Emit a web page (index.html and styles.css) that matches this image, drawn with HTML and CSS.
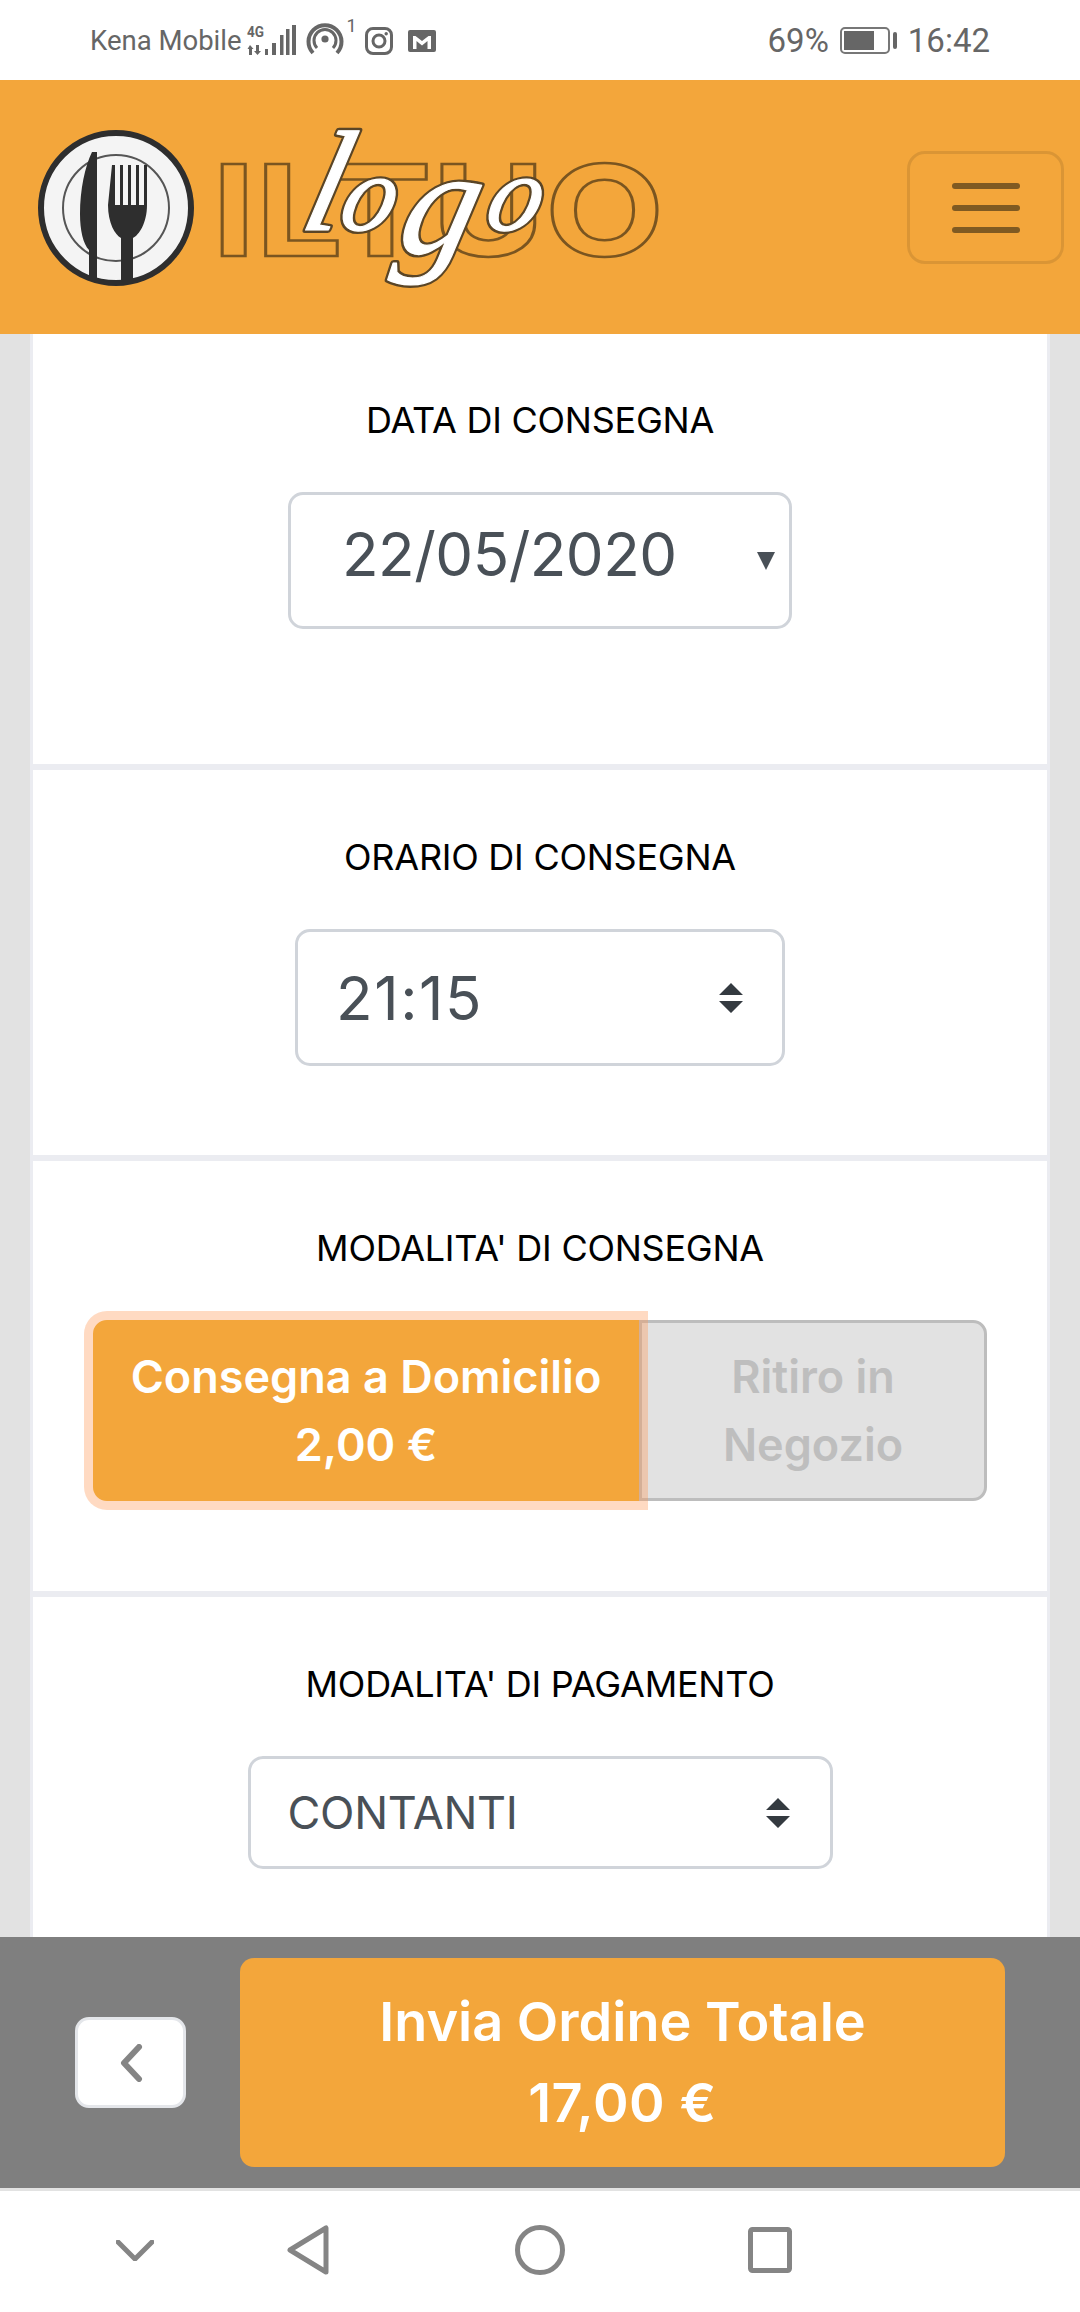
FILE: index.html
```html
<!DOCTYPE html>
<html lang="it">
<head>
<meta charset="utf-8">
<title>Il Tuo Logo - Ordine</title>
<link rel="stylesheet" href="styles.css">
</head>
<body>
<div class="page">
  <div class="status">
    <div class="status-left">
      <span class="carrier">Kena Mobile</span>
      <svg class="ic-signal" viewBox="0 0 50 32" width="50" height="32">
        <text class="net" x="0" y="12" textLength="17" lengthAdjust="spacingAndGlyphs">4G</text>
        <path class="fill" d="M3 20l3.500 4H5v6H2v-6H0.500zM9 20h3v6h2l-3.500 4L7 26h2zM18 24h3v6h-3zM25 18h4v12h-4zM33 10h3.500v20H33zM39 4h3.500v26H39zM45 0h4v30h-4z"/>
      </svg>
      <svg class="ic-hotspot" viewBox="0 0 34 32" width="34" height="32">
        <circle class="fill" cx="17" cy="15" r="3.6"/>
        <path class="line" d="M9 24a11 11 0 1 1 16 0"/>
        <path class="line2" d="M5 29a16.5 16.5 0 1 1 24 0"/>
      </svg>
      <span class="sup">1</span>
      <svg class="ic-insta" viewBox="0 0 28 28" width="28" height="28">
        <rect class="line" x="1.5" y="1.5" width="25" height="25" rx="6.5"/>
        <circle class="line" cx="14" cy="14" r="6"/>
        <circle class="fill" cx="21.2" cy="6.8" r="1.7"/>
      </svg>
      <svg class="ic-mail" viewBox="0 0 28 22" width="28" height="22">
        <path class="fill" fill-rule="evenodd" d="M2 0h24a2 2 0 0 1 2 2v18a2 2 0 0 1-2 2H2a2 2 0 0 1-2-2V2a2 2 0 0 1 2-2zM5 6v13h3.500V11l5.500 4.500L19.500 11v8H23V6h-2.500L14 11 7.500 6z"/>
      </svg>
    </div>
    <div class="status-right">
      <span>69%</span>
      <div class="battery"><div class="battery-level"></div></div>
      <div class="battery-tip"></div>
      <span>16:42</span>
    </div>
  </div>

  <header class="topbar">
    <svg class="logo" viewBox="30 120 640 180" width="640" height="180" role="img" aria-label="Il Tuo logo">
      <circle class="plate" cx="116" cy="208" r="75"/>
      <circle class="plate-inner" cx="116" cy="208" r="53"/>
      <path class="cutlery" d="M92 152c-7 14-12 38-12 62 0 16 3 30 9 36v30h8V152z"/>
      <path class="cutlery" d="M112 165h3v40h5v-40h3v40h5v-40h3v40h5v-40h3v40h5v-40h3v40c0 18-8 30-14 33v42h-12v-42c-6-3-13-15-13-33z"/>
      <text class="word" x="212" y="256" textLength="452" lengthAdjust="spacingAndGlyphs">ILTUO</text>
      <g class="script-wrap">
        <text class="script-back"><tspan class="s-l" x="2" y="0">l</tspan><tspan class="s-o" x="40" y="0">o</tspan><tspan class="s-g" x="104" y="23">g</tspan><tspan class="s-o" x="186" y="0">o</tspan></text>
        <text class="script"><tspan class="s-l" x="2" y="0">l</tspan><tspan class="s-o" x="40" y="0">o</tspan><tspan class="s-g" x="104" y="23">g</tspan><tspan class="s-o" x="186" y="0">o</tspan></text>
      </g>
    </svg>
    <button class="toggler" type="button" aria-label="Menu">
      <span class="bar"></span><span class="bar"></span><span class="bar"></span>
    </button>
  </header>

  <main class="content">
    <section class="card card-first">
      <h2 class="label">DATA DI CONSEGNA</h2>
      <div class="field field-date">
        <span>22/05/2020</span>
        <svg class="tri" viewBox="0 0 18 18" width="18" height="18"><path d="M0 0h18L9 18z"/></svg>
      </div>
    </section>
    <section class="card card-time">
      <h2 class="label">ORARIO DI CONSEGNA</h2>
      <div class="field field-time">
        <span>21:15</span>
        <svg class="updown" viewBox="0 0 4 5" width="24" height="30"><path d="M2 0L0 2h4zm0 5L0 3h4z"/></svg>
      </div>
    </section>
    <section class="card card-mode">
      <h2 class="label">MODALITA' DI CONSEGNA</h2>
      <div class="btn-group">
        <button class="opt opt-on" type="button">Consegna a Domicilio<br>2,00 €</button>
        <button class="opt opt-off" type="button">Ritiro in<br>Negozio</button>
      </div>
    </section>
    <section class="card">
      <h2 class="label">MODALITA' DI PAGAMENTO</h2>
      <div class="field field-pay">
        <span>CONTANTI</span>
        <svg class="updown" viewBox="0 0 4 5" width="24" height="30"><path d="M2 0L0 2h4zm0 5L0 3h4z"/></svg>
      </div>
    </section>
  </main>

  <footer class="actions">
    <button class="back" type="button" aria-label="Indietro">
      <svg viewBox="0 0 24 38" width="24" height="38"><path d="M20 3L5 19l15 16"/></svg>
    </button>
    <button class="send" type="button">Invia Ordine Totale<br><span class="send-total">17,00 €</span></button>
  </footer>

  <nav class="sysnav">
    <svg class="nav-hide" viewBox="0 0 38 21" width="38" height="21"><path d="M2 2l17 17L36 2"/></svg>
    <svg class="nav-back" viewBox="0 0 42 50" width="42" height="50"><path d="M39 3v44L3 25z"/></svg>
    <svg class="nav-home" viewBox="0 0 50 50" width="50" height="50"><circle cx="25" cy="25" r="22.500"/></svg>
    <svg class="nav-recent" viewBox="0 0 44 46" width="44" height="46"><rect x="2.500" y="2.500" width="39" height="41" rx="2"/></svg>
  </nav>
</div>
</body>
</html>
```
FILE: styles.css
```css
* { box-sizing: border-box; }
html, body { margin: 0; padding: 0; }
body { font-family: Inter, "Liberation Sans", sans-serif; background: #fff; }
.page { width: 1080px; height: 2312px; display: flex; flex-direction: column; overflow: hidden; background: #e2e2e2; }

/* status bar */
.status { height: 80px; flex: none; background: #fff; display: flex; justify-content: space-between; align-items: flex-start; font-family: Roboto, sans-serif; color: #666; }
.status-left { display: flex; align-items: flex-start; padding-left: 90px; }
.carrier { font-size: 27.5px; line-height: 30px; margin-top: 26px; }
.status svg { display: block; flex: none; overflow: visible; }
.status .fill { fill: #666; }
.status .line { fill: none; stroke: #666; stroke-width: 3px; }
.status .line2 { fill: none; stroke: #666; stroke-width: 4px; }
.net { font-family: Roboto, sans-serif; font-weight: 700; font-size: 15px; fill: #666; }
.ic-signal { margin: 25px 0 0 5px; }
.ic-hotspot { margin: 24px 0 0 11px; }
.sup { font-size: 18px; line-height: 16px; margin: 18px 0 0 5px; }
.ic-insta { margin: 27px 0 0 8px; }
.ic-mail { margin: 30px 0 0 15px; }
.status-right { display: flex; align-items: center; height: 80px; padding: 0 90px 0 0; font-size: 33px; }
.battery { width: 50px; height: 27px; border: 2px solid #777; border-radius: 5px; margin-left: 11px; padding: 2px; }
.battery-level { width: 30px; height: 100%; background: #666; }
.battery-tip { width: 4px; height: 17px; background: #666; border-radius: 2px; margin: 0 11px 0 3px; }

/* header */
.topbar { height: 254px; flex: none; background: #f3a63b; display: flex; justify-content: space-between; align-items: flex-start; padding-right: 16px; position: relative; z-index: 2; }
.logo { display: block; margin: 40px 0 0 30px; filter: blur(0.7px); overflow: visible; }
.plate { fill: #f4f4f4; stroke: #2e2e2e; stroke-width: 6px; }
.plate-inner { fill: none; stroke: #555; stroke-width: 2px; }
.cutlery { fill: #2e2e2e; }
.word { font-family: Inter, sans-serif; font-weight: 700; font-size: 126px; fill: #f3a63b; stroke: #7a5520; stroke-width: 2.5px; }
.script-wrap { transform: translate(296px, 230px) skewX(-14deg); }
.script, .script-back { font-family: "Liberation Serif", serif; font-style: italic; }
.s-l { font-size: 143px; }
.s-o { font-size: 108px; }
.s-g { font-size: 150px; }
.script-back { fill: none; stroke: #5a4526; stroke-width: 6px; stroke-linejoin: round; }
.script { fill: #fff; stroke: #fff; stroke-width: 1.2px; stroke-linejoin: round; }
.toggler { width: 157px; height: 113px; margin-top: 71px; padding: 0; background: transparent; border: 3px solid rgba(0,0,0,.1); border-radius: 18px; display: flex; flex-direction: column; align-items: center; justify-content: center; gap: 16px; }
.bar { display: block; width: 68px; height: 6px; border-radius: 3px; background: #7f5a22; }

/* cards */
.content { flex: 1; min-height: 0; overflow: hidden; padding: 0 30px; }
.card { background: #fff; border: 3px solid #ebecf1; padding: 60px 0 90px; display: flex; flex-direction: column; align-items: center; }
.card-first { margin-top: -4px; padding-bottom: 135px; height: 437px; }
.card-time { padding-bottom: 89px; }
.label { margin: 0 0 45px; font-size: 36px; line-height: 54px; font-weight: 400; letter-spacing: -0.25px; color: #000; text-align: center; }
.field { border: 3px solid #d0d4da; border-radius: 15px; background: #fff; display: flex; align-items: center; justify-content: space-between; color: #495057; }
.field-date { width: 504px; height: 137px; font-size: 60px; letter-spacing: -0.5px; padding: 0 14px 0 51px; }
.field-date span { margin-bottom: 13px; }
.tri { fill: #495057; }
.field-time { width: 490px; height: 137px; font-size: 60px; letter-spacing: 1.6px; padding: 0 39px 0 38px; }
.field-pay { width: 585px; height: 113px; font-size: 45px; letter-spacing: -0.3px; padding: 0 40px 0 37px; }
.updown { fill: #343a40; }

/* option buttons */
.btn-group { display: flex; }
.opt { height: 181px; font-family: inherit; font-size: 45px; line-height: 67.5px; font-weight: 600; padding: 0; border: 3px solid; }
.opt-on { width: 546px; background: #f3a63b; border-color: #f3a63b; color: #fff; border-radius: 14px 0 0 14px; box-shadow: 0 0 0 9px rgba(255,150,80,.35); position: relative; z-index: 1; }
.opt-off { width: 348px; background: #e2e2e2; border-color: #bdbdbd; color: #bebebe; border-radius: 0 14px 14px 0; }

/* footer */
.actions { height: 254px; flex: none; background: #7f7f7f; border-bottom: 3px solid #e2e2e2; display: flex; align-items: center; padding: 0 75px; justify-content: space-between; position: relative; z-index: 2; }
.back { width: 111px; height: 91px; padding: 0; background: #fff; border: 3px solid #e4e6ea; border-radius: 14px; display: flex; align-items: center; justify-content: center; }
.back svg { display: block; }
.back path { fill: none; stroke: #858585; stroke-width: 6px; stroke-linecap: round; stroke-linejoin: round; }
.send { width: 765px; height: 209px; padding: 0 0 2px; background: #f3a63b; border: 0; border-radius: 14px; color: #fff; font-family: inherit; font-size: 54px; line-height: 81px; font-weight: 600; }
.send-total { letter-spacing: 0.6px; }

/* system navigation */
.sysnav { height: 121px; flex: none; background: #fff; display: flex; align-items: center; padding: 0 0 3px 116px; }
.sysnav svg { display: block; flex: none; }
.sysnav path, .sysnav circle, .sysnav rect { fill: none; stroke: #858585; stroke-width: 5px; stroke-linejoin: round; stroke-linecap: round; }
.nav-back { margin-left: 133px; }
.nav-home { margin-left: 186px; }
.nav-recent { margin-left: 183px; }
```
